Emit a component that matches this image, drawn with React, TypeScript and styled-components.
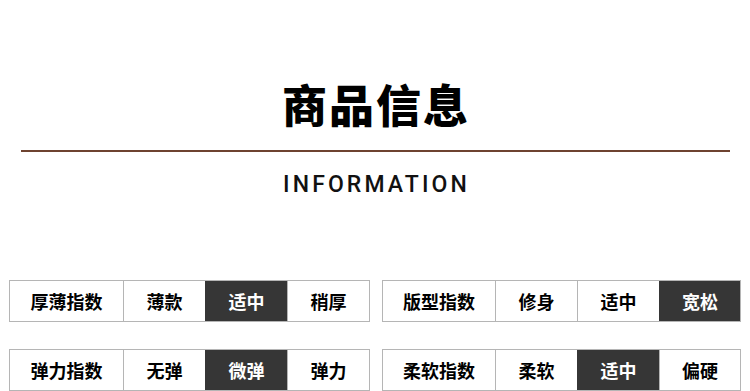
import React from "react";
import styled, { createGlobalStyle } from "styled-components";

type Spec = {
    label: string,
    options: string[],
    active: number
}

// column widths of each spec table, label first
const LEFT_COLS = [113, 82, 82, 82];
const RIGHT_COLS = [112, 82, 82, 81];

const SPECS: Spec[][] = [
    [
        { label: '厚薄指数', options: ['薄款', '适中', '稍厚'], active: 1 },
        { label: '版型指数', options: ['修身', '适中', '宽松'], active: 2 },
    ],
    [
        { label: '弹力指数', options: ['无弹', '微弹', '弹力'], active: 1 },
        { label: '柔软指数', options: ['柔软', '适中', '偏硬'], active: 1 },
    ],
];

const SpecTable = ({ label, options, active, cols }: Spec & { cols: number[] }) => (
    <Table $cols={cols}>
        <LabelCell>{label}</LabelCell>
        {options.map((opt, i) => (
            <OptionCell key={opt + i} $active={i === active}>{opt}</OptionCell>
        ))}
    </Table>
);

export default function App() {
    return (
        <>
            <GlobalStyle />
            <Page>
                <Header>
                    <Title>商品信息</Title>
                    <Divider />
                    <Subtitle>INFORMATION</Subtitle>
                </Header>
                <Specs>
                    {SPECS.map((row, r) => (
                        <SpecRow key={r}>
                            {row.map((spec, c) => (
                                <SpecTable key={spec.label} cols={c === 0 ? LEFT_COLS : RIGHT_COLS} {...spec} />
                            ))}
                        </SpecRow>
                    ))}
                </Specs>
            </Page>
        </>
    );
}

//style

const GlobalStyle = createGlobalStyle`
    html, body {
        margin: 0;
        padding: 0;
        background: #fff;
    }
    body {
        font-family: "Noto Sans CJK SC", "Noto Sans", sans-serif;
    }
`;

const Page = styled.div`
    width: 750px;
    height: 391px;
    overflow: hidden;
    background: #fff;
`;

const Header = styled.div`
    display: flex;
    flex-direction: column;
    align-items: center;
    padding-top: 76px;
`;

const Title = styled.div`
    font-size: 45px;
    font-weight: 900;
    line-height: 56px;
    letter-spacing: 2px;
    padding-left: 2px;
    color: #000;
`;

const Divider = styled.div`
    width: 709px;
    height: 2px;
    margin-top: 18px;
    margin-left: 1px;
    background-color: #6e4330;
`;

const Subtitle = styled.div`
    margin-top: 19px;
    font-family: Roboto, "Noto Sans", sans-serif;
    font-size: 23px;
    font-weight: 500;
    line-height: 28px;
    letter-spacing: 3.1px;
    padding-left: 3px;
    color: #111;
`;

const Specs = styled.div`
    display: flex;
    flex-direction: column;
    gap: 27px;
    padding: 81px 0 0 9px;
`;

const SpecRow = styled.div`
    display: flex;
    gap: 12px;
`;

const Table = styled.div<{ $cols: number[] }>`
    display: grid;
    grid-template-columns: ${p => p.$cols.map(c => c + 'px').join(' ')};
    border: 1px solid #b5b5b5;
    height: 40px;
`;

const Cell = styled.div`
    display: flex;
    align-items: center;
    justify-content: center;
    font-size: 18px;
    font-weight: 700;
    color: #000;
    border-left: 1px solid #b5b5b5;
`;

const LabelCell = styled(Cell)`
    border-left: none;
`;

const OptionCell = styled(Cell)<{ $active: boolean }>`
    background-color: ${p => p.$active ? '#363636' : '#fff'};
    color: ${p => p.$active ? '#fff' : '#000'};
    border-left-color: ${p => p.$active ? '#363636' : '#b5b5b5'};
`;
